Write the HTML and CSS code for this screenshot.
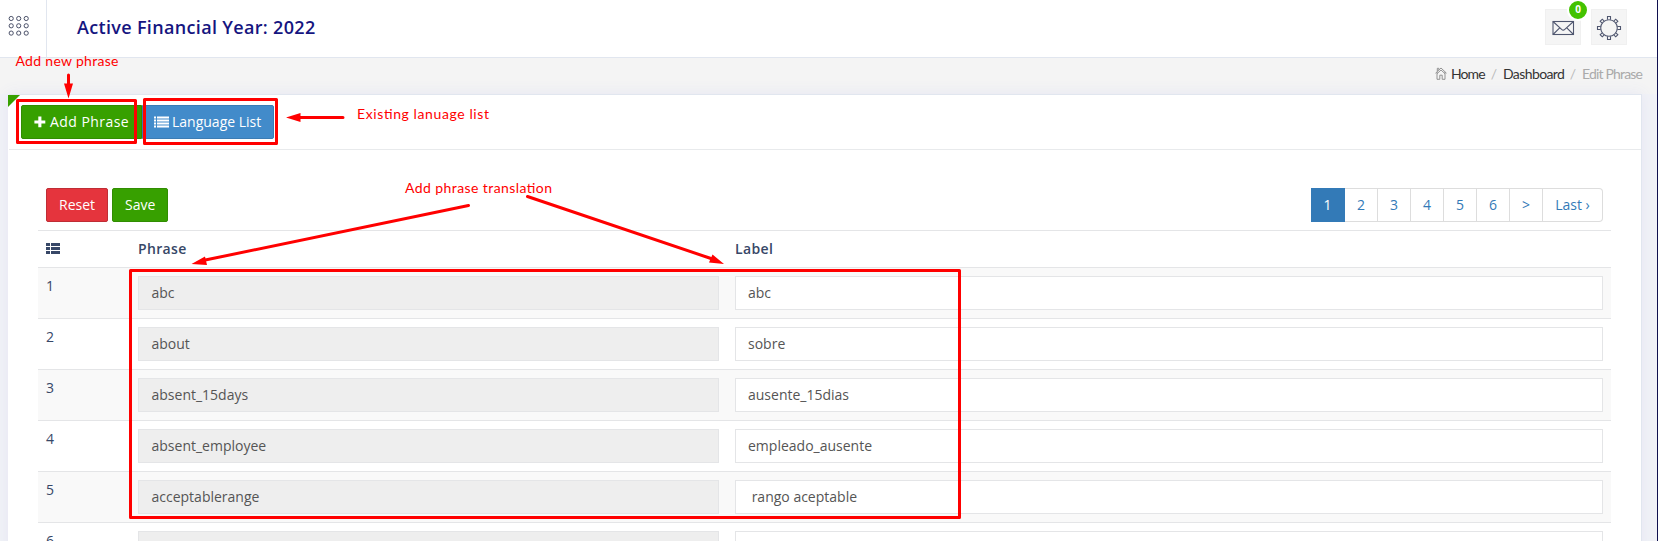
FILE: index.html
```
<!DOCTYPE html>
<html lang="en">
<head>
<meta charset="utf-8">
<title>Edit Phrase</title>
<link rel="stylesheet" href="styles.css">
</head>
<body>
<div class="app">
  <header class="topbar">
    <div class="menu-toggle">
      <svg width="22" height="22" viewBox="0 0 22 22" fill="none" stroke="#4a5068" stroke-width="1">
        <circle cx="3.2" cy="3.5" r="2.1"/><circle cx="10.7" cy="3.5" r="2.1"/><circle cx="18.2" cy="3.5" r="2.1"/>
        <circle cx="3.2" cy="10.8" r="2.1"/><circle cx="10.7" cy="10.8" r="2.1"/><circle cx="18.2" cy="10.8" r="2.1"/>
        <circle cx="3.2" cy="18.1" r="2.1"/><circle cx="10.7" cy="18.1" r="2.1"/><circle cx="18.2" cy="18.1" r="2.1"/>
      </svg>
    </div>
    <h1 class="year">Active Financial Year: 2022</h1>
    <div class="actions">
      <div class="icon-btn">
        <svg width="36" height="36" viewBox="0 0 36 36" fill="none" stroke="#4f566f" stroke-width="1.1">
          <rect x="8" y="12.5" width="20.5" height="13"/>
          <path d="M8 12.5 16.6 20.4Q18.2 21.8 19.8 20.4L28.5 12.5M8 25.5 14.7 18.8M28.5 25.5 21.8 18.8"/>
        </svg>
        <span class="badge">0</span>
      </div>
      <div class="icon-btn">
        <svg width="36" height="36" viewBox="0 0 36 36" fill="none" stroke="#4f566f" stroke-width="1.1">
          <circle cx="18" cy="19" r="8.3"/>
          <path d="M16.5 10.7V7.500H19.500V10.700"/>
          <path d="M16.500 10.700V8H19.500V10.700" transform="rotate(45 18 19)"/>
          <path d="M16.500 10.700V7.500H19.500V10.700" transform="rotate(90 18 19)"/>
          <path d="M16.500 10.700V8H19.500V10.700" transform="rotate(135 18 19)"/>
          <path d="M16.500 10.700V7.500H19.500V10.700" transform="rotate(180 18 19)"/>
          <path d="M16.500 10.700V8H19.500V10.700" transform="rotate(225 18 19)"/>
          <path d="M16.500 10.700V7.500H19.500V10.700" transform="rotate(270 18 19)"/>
          <path d="M16.500 10.700V8H19.500V10.700" transform="rotate(315 18 19)"/>
        </svg>
      </div>
    </div>
  </header>

  <nav class="breadcrumb">
    <svg width="12" height="13" viewBox="0 0 12 13" fill="none" stroke="#888" stroke-width=".9">
      <path d="M.5 6.2 6 1l5.500 5.200M2 5v7.300h2.800V8.200h2.400v4.100H10V5M2.300 4.200V1.300h1.500v1.500M2 6.700 6 3l4 3.700"/>
    </svg>
    <span class="crumb home">Home</span><span class="slash">/</span><span class="crumb">Dashboard</span><span class="slash">/</span><span class="crumb current">Edit Phrase</span>
  </nav>

  <main class="panel">
    <div class="panel-head">
      <span class="corner"></span>
      <a class="btn green add"><svg width="12" height="12" viewBox="0 0 12 12"><path fill="#fff" d="M4.300 .5h3.100v3.900h3.900v3H7.400v3.900H4.300V7.400H.4v-3h3.900z"/></svg>Add Phrase</a><a class="btn blue"><svg width="15" height="12" viewBox="0 0 15 12" fill="#fff"><path d="M0 .5h2v2H0zM3 .5h12v2H3zM0 3.500h2v2H0zM3 3.500h12v2H3zM0 6.500h2v2H0zM3 6.500h12v2H3zM0 9.500h2v2H0zM3 9.500h12v2H3z"/></svg>Language List</a>
    </div>
    <div class="toolbar">
      <a class="btn red">Reset</a>
      <a class="btn green">Save</a>
      <div class="pages"><a class="on">1</a><a>2</a><a>3</a><a>4</a><a>5</a><a>6</a><a>&gt;</a><a class="last">Last ›</a></div>
    </div>
    <div class="table">
      <div class="row head">
        <div><svg width="14" height="11" viewBox="0 0 14 11" fill="#374767"><path d="M0 0h4v3H0zM5 0h9v3H5zM0 4h4v3H0zM5 4h9v3H5zM0 8h4v3H0zM5 8h9v3H5z"/></svg></div>
        <div>Phrase</div><div>Label</div>
      </div>
      <div class="row odd"><div>1</div><div class="field ro">abc</div><div class="field">abc</div></div>
      <div class="row"><div>2</div><div class="field ro">about</div><div class="field">sobre</div></div>
      <div class="row odd"><div>3</div><div class="field ro">absent_15days</div><div class="field">ausente_15dias</div></div>
      <div class="row"><div>4</div><div class="field ro">absent_employee</div><div class="field">empleado_ausente</div></div>
      <div class="row odd"><div>5</div><div class="field ro">acceptablerange</div><div class="field"> rango aceptable</div></div>
      <div class="row"><div>6</div><div class="field ro"></div><div class="field"></div></div>
    </div>
  </main>

  <svg class="notes" width="1658" height="541" viewBox="0 0 1658 541">
    <g fill="none" stroke="#f00" stroke-width="3" stroke-linejoin="round" stroke-linecap="round">
      <rect x="17.5" y="100.5" width="118" height="42"/>
      <rect x="144.5" y="99.5" width="132" height="44"/>
      <rect x="130.5" y="270.5" width="829" height="247"/>
      <path d="M68.5 75V86M343 117.5H298M468.5 205.5 204 260.3M527.5 196.5 711 258.5"/>
    </g>
    <g fill="#f00">
      <path d="M64 83.5h9L68.5 98.5zM300.5 113v9L286 117.5zM205 256.5 207 265 191.500 264zM712.500 254.500 709 262.500 724 264z"/>
    </g>
    <g class="note-text">
      <text x="15.5" y="66" textLength="103">Add new phrase</text>
      <text x="357" y="119" textLength="132">Existing lanuage list</text>
      <text x="405" y="193" textLength="147">Add phrase translation</text>
    </g>
  </svg>
</div>
</body>
</html>
```
FILE: styles.css
```
* { box-sizing: border-box; }
body { margin: 0; font: 14px/20px "Open Sans", sans-serif; color: #374767; }
.app { position: relative; height: 541px; overflow: hidden; background: #f1f2f7; border-right: 1px solid #10104f; }
.topbar { display: flex; height: 58px; background: #fff; border-bottom: 1px solid #e1e6ef; }
.menu-toggle { width: 47px; padding: 15px 0 0 8px; border-right: 1px solid #e1e6ef; }
.menu-toggle svg { display: block; }
.year { margin: 0; padding-left: 30px; font-size: 18px; line-height: 55px; font-weight: 600; letter-spacing: .33px; color: #15157f; }
.actions { display: flex; gap: 10px; margin-left: auto; padding: 9px 30px 0 0; }
.icon-btn { position: relative; width: 36px; height: 36px; background: #f5f5f5; border: 1px solid #f0f0f0; }
.icon-btn svg { display: block; margin: -1px; }
.badge { position: absolute; left: 21px; top: -11px; width: 22px; height: 22px; border: 2px solid #fff; border-radius: 50%; background: #43c200; color: #fff; font: 700 10px/17px "Open Sans", sans-serif; text-align: center; }
.breadcrumb { display: flex; justify-content: flex-end; height: 36px; padding: 6px 15px 0 0; background: #f4f4f4; font: 14px/20px Lato, sans-serif; color: #333; }
.breadcrumb svg { margin: 3px 4px 0 0; }
.crumb { width: 60px; white-space: nowrap; letter-spacing: -.6px; }
.home { width: 33px; letter-spacing: -.9px; }
.slash { width: 19px; padding-left: 1px; text-align: center; color: #bbb; }
.current { color: #aaa; letter-spacing: -.82px; }
.panel { width: 1634px; height: 460px; margin-left: 8px; background: #fff; border: 1px solid #e1e6ef; border-left-color: #fff; box-shadow: 0 0 14px #e5e6f2; }
.panel-head { position: relative; display: flex; height: 55px; padding: 10px 12px; border-bottom: 1px solid #e8eaec; }
.corner { position: absolute; left: -1px; top: 0; border-top: 12px solid #37a000; border-right: 12px solid transparent; }
.btn { display: flex; align-items: center; height: 34px; padding: 0 12px; border: 1px solid #318d01; border-radius: 2px; color: #fff; white-space: nowrap; }
.btn svg { margin-right: 4px; flex: none; }
.green { background: #37a000; }
.add { width: 121px; border-radius: 2px 0 0 2px; letter-spacing: .45px; }
.blue { width: 132px; padding-left: 11px; background: #428bca; border-color: #3b7cb4; border-radius: 0 2px 2px 0; }
.blue svg { margin-right: 3px; }
.red { background: #e5343d; border-color: #bf2d35; }
.toolbar { display: flex; gap: 4px; padding: 38px 38px 8px 37px; }
.toolbar .red { width: 62px; }
.toolbar .green { width: 56px; }
.pages { display: flex; margin-left: auto; border-radius: 4px; }
.pages a { width: 33px; height: 34px; border: solid #ddd; border-width: 1px 1px 1px 0; line-height: 31px; text-align: center; color: #337ab7; }
.pages .on { width: 34px; background: #337ab7; border-color: #337ab7; color: #fff; }
.pages .last { width: 60px; border-radius: 0 4px 4px 0; }
.table { width: 1573px; margin-left: 29px; }
.row { display: grid; grid-template-columns: 92px 581px 868px; height: 51px; padding: 8px; border-top: 1px solid #e4e5e7; }
.row > :nth-child(2) { margin-left: 0; }
.row > :nth-child(3) { margin-left: 16px; width: 868px; }
.head { height: 37px; font-weight: 600; letter-spacing: .35px; }
.head svg { display: block; margin-top: 4px; }
.odd { background: #f9f9f9; }
.field { height: 34px; padding: 0 12px; border: 1px solid #e4e5e7; background: #fff; line-height: 32px; color: #555; white-space: pre; }
.ro { background: #eee; padding-left: 12.5px; }
.notes { position: absolute; left: 0; top: 0; }
.note-text { font: 14px Lato, sans-serif; fill: #f00; }
```
